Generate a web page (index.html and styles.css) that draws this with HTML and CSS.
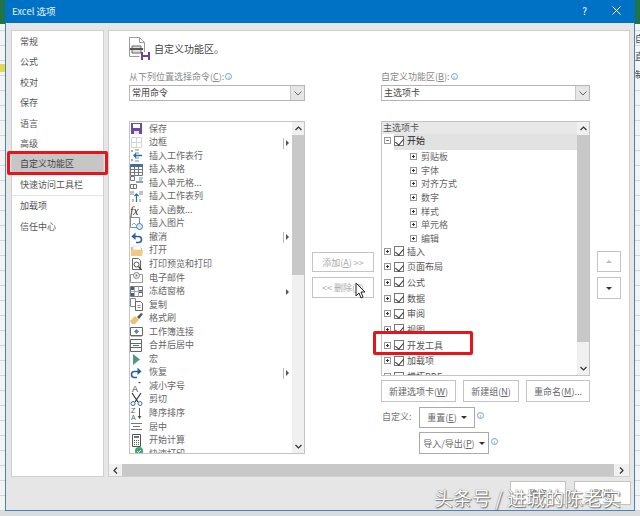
FILE: index.html
```html
<!DOCTYPE html>
<html lang="zh-CN">
<head>
<meta charset="utf-8">
<title>Excel 选项</title>
<link rel="stylesheet" href="styles.css">
</head>
<body>
<div class="screen">
  <div class="stage">
    <div class="strip strip-left">
      <div class="strip-top"></div>
      <div class="strip-yellow"></div>
    </div>
    <div class="dialog">
      <div class="titlebar">
        <span class="title">Excel 选项</span>
        <span class="help">?</span>
        <svg class="close" width="9" height="9" viewBox="0 0 9 9"><path d="M.5.500l8 8M8.500.5l-8 8" stroke="#fff" stroke-width="1"/></svg>
      </div>
      <div class="dialog-body">
        <nav class="sidebar">
          <div class="nav-group">
            <div class="nav-item">常规</div>
            <div class="nav-item">公式</div>
            <div class="nav-item">校对</div>
            <div class="nav-item">保存</div>
            <div class="nav-item">语言</div>
            <div class="nav-item">高级</div>
            <div class="nav-item nav-selected">自定义功能区</div>
            <div class="nav-item">快速访问工具栏</div>
          </div>
          <div class="nav-group">
            <div class="nav-item">加载项</div>
            <div class="nav-item">信任中心</div>
          </div>
        </nav>
        <main class="panel">
          <div class="content">
            <div class="head">
              <svg width="21" height="23" viewBox="0 0 21 23"><path d="M.5.500h10l5 5v10M.5.500v19h10" fill="#fff" stroke="#999"/><path d="M10.500.5v5h5" fill="none" stroke="#999"/><path d="M3 9h9v7H3z" fill="#ddd" stroke="#666"/><path d="M1 11h13v2H1z" fill="#555"/><path d="M12 15h9v8h-9z" fill="#70418f"/><path d="M14 15h5v3h-5zM14 20h5v3h-5z" fill="#fff"/></svg>
              <span class="head-text">自定义功能区。</span>
            </div>
            <div class="columns">
              <section class="col col-left">
                <div class="field-label">从下列位置选择命令(<u>C</u>):<i class="info">i</i></div>
                <div class="select"><span class="select-value">常用命令</span><span class="select-btn"><svg width="8" height="5" viewBox="0 0 8 5"><path d="M.5.500L4 4 7.500.5" fill="none" stroke="#666"/></svg></span></div>
                <div class="list list-left">
                  <div class="items">
                    <div class="cmd"><svg width="13" height="13" viewBox="0 0 13 13"><path d="M1 1h11v11H1z" fill="#6f4a9c"/><path d="M3 2h7v4H3z" fill="#fff"/><path d="M4 9h5v3H4z" fill="#e8e0f0"/></svg><span>保存</span></div>
                    <div class="cmd"><svg width="13" height="13" viewBox="0 0 13 13"><path d="M1.500 1.500h10v10h-10zM6.500 1.500v10M1.500 6.500h10" fill="none" stroke="#d5d5d5"/></svg><span>边框</span><b class="sub sub-line"></b></div>
                    <div class="cmd"><svg width="13" height="13" viewBox="0 0 13 13"><path d="M5 1h4M5 4h4M5 9h4M5 12h4" stroke="#888"/><path d="M12 6.500H4M6 4.500l-2 2 2 2" fill="none" stroke="#1e6fb5" stroke-width="1.300"/><path d="M1 1h2v2H1zM1 10h2v2H1z" fill="#aaa"/></svg><span>插入工作表行</span></div>
                    <div class="cmd"><svg width="13" height="13" viewBox="0 0 13 13"><path d="M.5 1.500h12v11H.5zM.5 6.500h12M.5 9.500h12M4.500 3.500v9M8.500 3.500v9" fill="#fff" stroke="#777"/><path d="M.5 1h12v3H.5z" fill="#3e6fa8"/></svg><span>插入表格</span></div>
                    <div class="cmd"><svg width="13" height="13" viewBox="0 0 13 13"><path d="M.5.500h4v4h-4zM.5 8.500h6v4h-6zM3.500 8.500v4" fill="none" stroke="#777"/><path d="M6 6h7" stroke="#1e6fb5" stroke-width="1.200"/><path d="M9 2h4M9 4h3" stroke="#888"/></svg><span>插入单元格...</span></div>
                    <div class="cmd"><svg width="13" height="13" viewBox="0 0 13 13"><path d="M6.500 12V4M4.500 6l2-2 2 2" fill="none" stroke="#1e6fb5" stroke-width="1.200"/><path d="M1 1v4M3 1v4M10 1v4M12 1v4" stroke="#888"/><path d="M3 9v3M10 9v3" stroke="#888"/></svg><span>插入工作表列</span></div>
                    <div class="cmd"><svg width="13" height="13" viewBox="0 0 13 13"><text class="fx" x="0" y="11">fx</text></svg><span>插入函数...</span></div>
                    <div class="cmd"><svg width="13" height="13" viewBox="0 0 13 13"><path d="M.5.500h9v10h-9z" fill="#fff" stroke="#888"/><circle cx="9.500" cy="9.500" r="3" fill="#dbe9f6" stroke="#3a7ebf"/><path d="M2 8l2-2 2 2" fill="none" stroke="#7ab"/></svg><span>插入图片</span></div>
                    <div class="cmd"><svg width="13" height="13" viewBox="0 0 13 13"><path d="M3 5.500h5.500a3 3 0 0 1 0 6H6" fill="none" stroke="#2b5f9e" stroke-width="1.600"/><path d="M5.500 1.500L1.500 5.500l4 3.500z" fill="#2b5f9e"/></svg><span>撤消</span><b class="sub sub-line"></b></div>
                    <div class="cmd"><svg width="13" height="13" viewBox="0 0 13 13"><path d="M1 3h4l1 1h6v8H1z" fill="#e9b766"/><path d="M3 2h8v4H3z" fill="#fff" stroke="#ccc" stroke-width=".5"/><path d="M1 6h12l-1 6H1z" fill="#f2c888"/></svg><span>打开</span></div>
                    <div class="cmd"><svg width="13" height="13" viewBox="0 0 13 13"><path d="M2.500.500h6l2 2v9h-8z" fill="#fff" stroke="#666"/><circle cx="6.500" cy="6.500" r="2.500" fill="#fff" stroke="#555"/><path d="M8.500 8.500l3 3.500" stroke="#444" stroke-width="1.400"/></svg><span>打印预览和打印</span></div>
                    <div class="cmd"><svg width="13" height="13" viewBox="0 0 13 13"><path d="M.5 3.500h12v8H.5z" fill="#fff" stroke="#999"/><circle cx="6.500" cy="4.500" r="3" fill="#eee" stroke="#888"/><circle cx="6.500" cy="4.500" r="1" fill="#777"/></svg><span>电子邮件</span></div>
                    <div class="cmd"><svg width="13" height="13" viewBox="0 0 13 13"><path d="M.5 1.500h12v10H.5z" fill="#fff" stroke="#777"/><path d="M1 2h4v3H1zM8 5h4v3H8zM1 8h4v3H1z" fill="#40608a"/><path d="M.5 6.500h12M4.500 1.500v10M8.500 1.500v10" stroke="#aaa" fill="none"/></svg><span>冻结窗格</span><b class="sub"></b></div>
                    <div class="cmd"><svg width="13" height="13" viewBox="0 0 13 13"><path d="M.5.500h5v8h-5z" fill="#fff" stroke="#7a8aa0"/><path d="M5.500 3.500h5l2 2v7h-7z" fill="#fff" stroke="#666"/><path d="M7.500 7.500h3M7.500 9.500h3" stroke="#888"/></svg><span>复制</span></div>
                    <div class="cmd"><svg width="13" height="13" viewBox="0 0 13 13"><path d="M0 9l5-5 4 4-4 4H2z" fill="#e9c278"/><path d="M7 5l4-4 2 1-4 5z" fill="#555"/></svg><span>格式刷</span></div>
                    <div class="cmd"><svg width="13" height="13" viewBox="0 0 13 13"><path d="M.5 2.500h12v8H.5z" fill="#fff" stroke="#666"/><path d="M6.500 4l2.500 2.500L6.500 9 4 6.500z" fill="#4c86c6"/><path d="M1 11.500h11" stroke="#bbb"/></svg><span>工作簿连接</span></div>
                    <div class="cmd"><svg width="13" height="13" viewBox="0 0 13 13"><path d="M.5.500h11v12H.5zM.5 4.500h11M.5 8.500h11" fill="#fff" stroke="#666"/><path d="M3 6.500h6" stroke="#3a70a8"/></svg><span>合并后居中</span></div>
                    <div class="cmd"><svg width="13" height="13" viewBox="0 0 13 13"><path d="M3 1l7 5.500L3 12z" fill="#4f9a7c"/></svg><span>宏</span></div>
                    <div class="cmd"><svg width="13" height="13" viewBox="0 0 13 13"><path d="M10 5.500H4.500a3 3 0 0 0 0 6H7" fill="none" stroke="#2b5f9e" stroke-width="1.600"/><path d="M7.500 1.500l4 4-4 3.500z" fill="#2b5f9e"/></svg><span>恢复</span><b class="sub sub-line"></b></div>
                    <div class="cmd"><svg width="13" height="13" viewBox="0 0 13 13"><text class="glyph" x="2" y="12">A</text><path d="M8 2h3L9.500 3.500z" fill="#444"/></svg><span>减小字号</span></div>
                    <div class="cmd"><svg width="13" height="13" viewBox="0 0 13 13"><path d="M2 0l6 9M11 0L5 9" stroke="#333" stroke-width="1.200"/><circle cx="3" cy="10.500" r="2" fill="none" stroke="#2f6cab"/><circle cx="10" cy="10.500" r="2" fill="none" stroke="#2f6cab"/></svg><span>剪切</span></div>
                    <div class="cmd"><svg width="13" height="13" viewBox="0 0 13 13"><text class="glyph glyph-small" x="1" y="6">Z</text><text class="glyph glyph-small glyph-blue" x="1" y="13">A</text><path d="M9.500 1v10" stroke="#555"/><path d="M7.500 9h4l-2 3z" fill="#555"/></svg><span>降序排序</span></div>
                    <div class="cmd"><svg width="13" height="13" viewBox="0 0 13 13"><path d="M1 3.500h11M3 6.500h7M1 9.500h11" stroke="#777"/></svg><span>居中</span></div>
                    <div class="cmd"><svg width="13" height="13" viewBox="0 0 13 13"><path d="M2.500.500h8v12h-8z" fill="#fff" stroke="#555"/><path d="M4 2h5v2H4z" fill="#5a7a9a"/><path d="M4 6h1v1H4zM6 6h1v1H6zM8 6h1v1H8zM4 8h1v1H4zM6 8h1v1H6zM8 8h1v1H8zM4 10h1v1H4zM6 10h1v1H6zM8 10h1v1H8z" fill="#555"/></svg><span>开始计算</span></div>
                    <div class="cmd"><svg width="13" height="13" viewBox="0 0 13 13"><path d="M0 7h7v5H0z" fill="#666"/><circle cx="9" cy="4" r="4" fill="#3fa66e"/><path d="M7 4l1.500 1.500L11 3" fill="none" stroke="#fff"/></svg><span>快速打印</span></div>
                  </div>
                  <div class="vscroll">
                    <span class="arrow"><svg width="7" height="5" viewBox="0 0 7 5"><path d="M.5 4l3-3 3 3" fill="none" stroke="#333" stroke-width="1.200"/></svg></span>
                    <div class="track"><div class="thumb thumb-left"></div></div>
                    <span class="arrow"><svg width="7" height="5" viewBox="0 0 7 5"><path d="M.5 1l3 3 3-3" fill="none" stroke="#333" stroke-width="1.200"/></svg></span>
                  </div>
                </div>
              </section>

              <section class="col col-mid">
                <button class="btn btn-mid btn-add" type="button">添加(<u>A</u>) &gt;&gt;</button>
                <button class="btn btn-mid btn-del" type="button">&lt;&lt; 删除(<u>R</u>)</button>
              </section>

              <section class="col col-right">
                <div class="field-label">自定义功能区(<u>B</u>):<i class="info">i</i></div>
                <div class="select"><span class="select-value">主选项卡</span><span class="select-btn"><svg width="8" height="5" viewBox="0 0 8 5"><path d="M.5.500L4 4 7.500.5" fill="none" stroke="#666"/></svg></span></div>
                <div class="list list-right">
                  <div class="items">
                    <div class="tree-head">主选项卡</div>
                    <div class="tree-row tree-selected"><b class="exp exp-minus"></b><b class="check"></b><span>开始</span></div>
                    <div class="tree-group">
                      <div class="tree-child"><b class="exp exp-dot"></b><span>剪贴板</span></div>
                      <div class="tree-child"><b class="exp exp-dot"></b><span>字体</span></div>
                      <div class="tree-child"><b class="exp exp-dot"></b><span>对齐方式</span></div>
                      <div class="tree-child"><b class="exp exp-dot"></b><span>数字</span></div>
                      <div class="tree-child"><b class="exp exp-dot"></b><span>样式</span></div>
                      <div class="tree-child"><b class="exp exp-dot"></b><span>单元格</span></div>
                      <div class="tree-child"><b class="exp exp-dot"></b><span>编辑</span></div>
                    </div>
                    <div class="tree-row"><b class="exp exp-plus"></b><b class="check"></b><span>插入</span></div>
                    <div class="tree-row"><b class="exp exp-plus"></b><b class="check"></b><span>页面布局</span></div>
                    <div class="tree-row"><b class="exp exp-plus"></b><b class="check"></b><span>公式</span></div>
                    <div class="tree-row"><b class="exp exp-plus"></b><b class="check"></b><span>数据</span></div>
                    <div class="tree-row"><b class="exp exp-plus"></b><b class="check"></b><span>审阅</span></div>
                    <div class="tree-row"><b class="exp exp-plus"></b><b class="check"></b><span>视图</span></div>
                    <div class="tree-row"><b class="exp exp-plus"></b><b class="check"></b><span>开发工具</span></div>
                    <div class="tree-row"><b class="exp exp-plus"></b><b class="check"></b><span>加载项</span></div>
                    <div class="tree-row"><b class="exp exp-plus"></b><b class="check"></b><span>横拓PDF</span></div>
                  </div>
                  <div class="vscroll">
                    <span class="arrow"><svg width="7" height="5" viewBox="0 0 7 5"><path d="M.5 4l3-3 3 3" fill="none" stroke="#333" stroke-width="1.200"/></svg></span>
                    <div class="track"><div class="thumb thumb-right"></div></div>
                    <span class="arrow"><svg width="7" height="5" viewBox="0 0 7 5"><path d="M.5 1l3 3 3-3" fill="none" stroke="#333" stroke-width="1.200"/></svg></span>
                  </div>
                </div>
                <div class="actions">
                  <button class="btn btn-new-tab" type="button">新建选项卡(<u>W</u>)</button>
                  <button class="btn btn-new-group" type="button">新建组(<u>N</u>)</button>
                  <button class="btn btn-rename" type="button">重命名(<u>M</u>)...</button>
                </div>
                <div class="custom-row">
                  <span class="custom-label">自定义:</span>
                  <button class="btn btn-reset" type="button">重置(<u>E</u>)<b class="caret"></b></button>
                  <i class="info">i</i>
                </div>
                <div class="custom-row custom-row-two">
                  <button class="btn btn-import" type="button">导入/导出(<u>P</u>)<b class="caret"></b></button>
                  <i class="info">i</i>
                </div>
              </section>

              <section class="col col-updown">
                <button class="btn btn-ud btn-up" type="button"><b class="tri-up"></b></button>
                <button class="btn btn-ud btn-down" type="button"><b class="tri-down"></b></button>
              </section>
            </div>
          </div>
          <div class="hscroll">
            <span class="harrow"><svg width="5" height="7" viewBox="0 0 5 7"><path d="M4 .5l-3 3 3 3" fill="none" stroke="#333" stroke-width="1.200"/></svg></span>
            <div class="hthumb"></div>
            <span class="harrow harrow-right"><svg width="5" height="7" viewBox="0 0 5 7"><path d="M1 .5l3 3-3 3" fill="none" stroke="#333" stroke-width="1.200"/></svg></span>
          </div>
        </main>
      </div>
      <div class="footer">
        <button class="btn btn-ok" type="button">确定</button>
        <button class="btn btn-cancel" type="button">取消</button>
      </div>
    </div>
    <div class="strip strip-right">
      <div class="strip-top"></div>
      <div class="strip-text">自</div>
      <div class="strip-text">直</div>
      <div class="strip-text">制</div>
    </div>
  </div>
  <div class="strip-bottom"></div>

  <div class="red-box red-nav"></div>
  <div class="red-box red-tree"></div>
  <svg class="cursor" width="12" height="17" viewBox="0 0 12 17"><path d="M1 1v13l3-3 2 5 2-1-2-5h4z" fill="#fff" stroke="#222"/></svg>
  <div class="watermark">头条号 / 进城的陈老实</div>
</div>
</body>
</html>
```

FILE: styles.css
```css
* { box-sizing: border-box; }
html, body { margin: 0; padding: 0; }
body { background: #e4e4e4; }

.screen {
  position: relative;
  width: 640px;
  height: 516px;
  overflow: hidden;
  font-family: "Noto Sans CJK SC", "Liberation Sans", sans-serif;
  font-size: 9px;
  color: #555;
  filter: blur(0.45px);
}
.stage { display: flex; height: 511px; }

.strip {
  width: 5px;
  overflow: hidden;
  background-color: #f4f4f4;
  background-image: repeating-linear-gradient(to bottom, #d6d6d6 0 1px, transparent 1px 15px);
}
.strip-top { height: 24px; background: #217346; }
.strip-yellow { height: 8px; margin-top: 40px; background: #e5d94a; }
.strip-text { height: 18px; line-height: 18px; font-size: 9px; color: #444; }
.strip-top + .strip-text { margin-top: 6px; }

.strip-bottom { height: 5px; background: #dcdcdc; }

.dialog {
  width: 630px;
  display: flex;
  flex-direction: column;
  background: #e6e6e6;
  border: 1px solid #3f86c4;
  border-top: 0;
}
.titlebar {
  height: 23px;
  margin: 0 -1px;
  display: flex;
  align-items: center;
  background: #0072c6;
  color: #fff;
  padding: 0 14px 2px 7px;
}
.title { font-size: 9.5px; flex: 1; color: #e8f2fb; }
.help { font-size: 10px; margin-right: 25px; }
.close { display: block; }

.dialog-body {
  height: 454px;
  display: flex;
  gap: 4px;
  padding: 7px 3px 0 5px;
}

.sidebar {
  width: 93px;
  height: 447px;
  background: #fff;
  border: 1px solid #d0d0d0;
}
.nav-group:first-child { border-bottom: 1px solid #e6e6e6; }
.nav-item {
  height: 20.4px;
  line-height: 20.4px;
  padding-left: 8px;
  white-space: nowrap;
}
.nav-group:first-child .nav-item:first-child { margin-top: 1px; }
.nav-selected { background: #c6c6c6; color: #444; }

.panel {
  width: 522px;
  height: 447px;
  background: #fff;
  border: 1px solid #d0d0d0;
  display: flex;
  flex-direction: column;
}
.content { flex: 1; padding: 6px 0 0 20px; min-height: 0; }
.head { display: flex; align-items: center; gap: 4px; height: 22px; }
.head svg { display: block; }
.head-text { font-size: 10px; color: #444; }

.columns { display: flex; margin-top: 11px; }
.col { display: flex; flex-direction: column; }
.col-left { width: 176px; }
.col-mid { width: 62px; margin-left: 7px; padding-top: 182px; gap: 5px; }
.col-right { width: 209px; margin-left: 7px; }
.col-updown { width: 24px; margin-left: 7px; padding-top: 181px; gap: 5px; }

.field-label { height: 15px; line-height: 13px; color: #888; white-space: nowrap; }
.info {
  display: inline-block;
  width: 7px;
  height: 7px;
  margin-left: 1px;
  border: 1px solid #6fa8dc;
  border-radius: 50%;
  font-size: 5px;
  line-height: 5px;
  font-style: normal;
  text-align: center;
  color: #3a7ebf;
  vertical-align: 1px;
}

.select {
  height: 16px;
  display: flex;
  border: 1px solid #b5b5b5;
  background: #fff;
}
.select-value { flex: 1; padding-left: 2px; line-height: 14px; color: #444; }
.select-btn {
  width: 14px;
  display: flex;
  align-items: center;
  justify-content: center;
  background: #e6e6e6;
  border-left: 1px solid #c8c8c8;
}

.list {
  display: flex;
  margin-top: 20px;
  border: 1px solid #c4c4c4;
  background: #fff;
  overflow: hidden;
}
.list-left { height: 333px; }
.list-right { height: 255px; }
.items { flex: 1; min-width: 0; overflow: hidden; }

.cmd {
  position: relative;
  display: flex;
  align-items: center;
  height: 13.55px;
  line-height: 13.55px;
  white-space: nowrap;
  color: #666;
}
.cmd svg { flex: none; width: 13px; height: 13px; margin-right: 6px; overflow: visible; }
.cmd span { position: relative; top: -0.5px; }
.sub {
  position: absolute;
  right: 3px;
  top: 4px;
  width: 0;
  height: 0;
  border-style: solid;
  border-width: 3px 0 3px 3px;
  border-color: transparent transparent transparent #555;
}
.sub-line::before {
  content: "";
  position: absolute;
  left: -6px;
  top: -5px;
  width: 1px;
  height: 11px;
  background: #bbb;
}
.fx { font: italic 12px "Liberation Serif", serif; fill: #333; }
.glyph { font: 9px "Liberation Sans", sans-serif; fill: #444; }
.glyph-small { font-size: 7px; fill: #555; }
.glyph-blue { fill: #2f6cab; }

.vscroll {
  flex: none;
  width: 12px;
  display: flex;
  flex-direction: column;
  background: #f0f0f0;
}
.arrow {
  flex: none;
  height: 13px;
  display: flex;
  align-items: center;
  justify-content: center;
}
.track { flex: 1; min-height: 0; }
.thumb { background: #c8c8c8; }
.thumb-left { height: 140px; }
.thumb-right { height: 207px; }

.tree-head {
  height: 12px;
  line-height: 12px;
  background: #e8e8e8;
  padding-left: 1px;
}
.tree-row {
  display: flex;
  align-items: center;
  height: 15.7px;
  color: #555;
  padding-left: 2px;
  white-space: nowrap;
}
.tree-selected {
  height: 16px;
  padding-bottom: 3px;
  color: #222;
  background: linear-gradient(to right, #fff 12px, #e2e2e2 12px);
}
.tree-group { margin-bottom: -2px; }
.tree-child {
  display: flex;
  align-items: center;
  height: 13.6px;
  margin-left: 28px;
  white-space: nowrap;
  color: #666;
}
.exp {
  position: relative;
  display: block;
  flex: none;
  width: 7px;
  height: 7px;
  border: 1px solid #999;
  background: #fff;
}
.exp::before, .exp::after { content: ""; position: absolute; background: #333; }
.exp::before { left: 1px; top: 2px; width: 3px; height: 1px; }
.exp-plus::after { left: 2px; top: 1px; width: 1px; height: 3px; }
.exp-dot::after { left: 2px; top: 1px; width: 1px; height: 3px; }
.exp-minus::before { background: #777; }
.tree-child .exp { margin-right: 4px; }
.check {
  position: relative;
  display: block;
  flex: none;
  width: 10px;
  height: 10px;
  margin: 0 3px;
  border: 1px solid #777;
  background: #fff;
}
.check::after {
  content: "";
  position: absolute;
  left: 2px;
  top: 0;
  width: 4px;
  height: 7px;
  border-right: 1px solid #333;
  border-bottom: 1px solid #333;
  transform: rotate(40deg);
}

.btn {
  display: flex;
  align-items: center;
  justify-content: center;
  padding: 0;
  margin: 0;
  background: #fff;
  border: 1px solid #c4c4c4;
  font: inherit;
  color: #666;
  white-space: nowrap;
}
.btn-mid { width: 62px; color: #aaa; }
.btn-add { height: 20px; }
.btn-del { height: 21px; }
.btn-ud { width: 24px; }
.btn-up { height: 21px; }
.btn-down { height: 22px; }
.tri-up, .tri-down { display: block; width: 0; height: 0; border-style: solid; }
.tri-up { border-width: 0 3px 3px; border-color: transparent transparent #bbb; }
.tri-down { border-width: 3px 3px 0; border-color: #333 transparent transparent; }

.actions { display: flex; margin-top: 4px; }
.actions .btn { height: 22px; }
.btn-new-tab { width: 75px; }
.btn-new-group { width: 56px; margin-left: 7px; }
.btn-rename { width: 64px; margin-left: 7px; }

.custom-row { display: flex; align-items: center; margin-top: 5px; }
.custom-row .info { margin-left: 2px; margin-top: -4px; vertical-align: 0; }
.custom-row-two { margin-top: 4px; padding-left: 38px; }
.custom-label { width: 38px; padding: 0 0 2px 1px; color: #777; }
.btn-reset { width: 56px; height: 21px; border-color: #aaa; }
.btn-import { width: 70px; height: 22px; border-color: #aaa; }
.caret {
  display: block;
  width: 0;
  height: 0;
  margin-left: 4px;
  border-style: solid;
  border-width: 3px 3px 0;
  border-color: #333 transparent transparent;
}

.hscroll { flex: none; height: 12px; display: flex; background: #f0f0f0; }
.harrow {
  flex: none;
  width: 13px;
  display: flex;
  align-items: center;
  justify-content: center;
}
.harrow-right { width: 15px; }
.hthumb { flex: 1; background: #c8c8c8; }

.footer {
  flex: 1;
  display: flex;
  justify-content: flex-end;
  gap: 8px;
  padding: 4px 3px 0 0;
}
.btn-ok { width: 56px; height: 24px; }
.btn-cancel { width: 57px; height: 24px; }

.red-box { position: absolute; border: 3px solid #e8141c; border-radius: 2px; }
.red-nav { left: 7px; top: 151px; width: 101px; height: 24px; }
.red-tree { left: 373px; top: 331px; width: 100px; height: 24px; }
.cursor { position: absolute; left: 355px; top: 282px; display: block; }
.watermark {
  position: absolute;
  left: 434px;
  top: 485px;
  font-size: 19px;
  line-height: 26px;
  color: #fff;
  white-space: nowrap;
  text-shadow: 0 0 1px #444, 1px 1px 1px #777;
}
```
